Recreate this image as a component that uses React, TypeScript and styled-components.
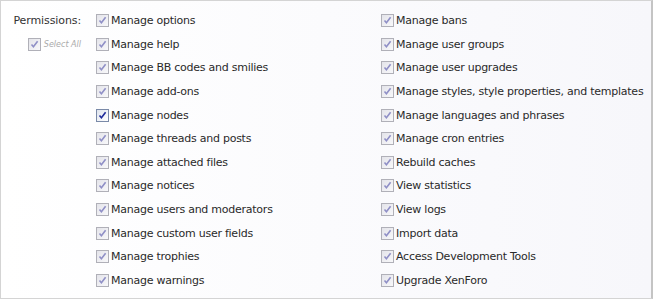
import React, { useState } from 'react';
import styled, { createGlobalStyle } from 'styled-components';

const GlobalStyle = createGlobalStyle`
  html, body {
    margin: 0;
    padding: 0;
    background: #ffffff;
  }
  body {
    font-family: "DejaVu Sans", Tahoma, sans-serif;
  }
`;

const Panel = styled.div`
  box-sizing: border-box;
  width: 653px;
  height: 299px;
  border: 1px solid #d4d4d4;
  border-right: 2px solid #c4c4c4;
  background: linear-gradient(to right, #ffffff 0%, #fbfbfd 50%, #f7f7fb 100%);
  display: flex;
  padding: 8px 0 0 0;
`;

const LabelColumn = styled.div`
  width: 81px;
  flex-shrink: 0;
  display: flex;
  flex-direction: column;
  align-items: flex-end;
`;

const FieldLabel = styled.div`
  height: 23.6px;
  line-height: 23.6px;
  font-size: 11px;
  letter-spacing: -0.1px;
  color: #333;
  padding-right: 1px;
`;

const SelectAll = styled.label`
  height: 23.6px;
  display: flex;
  align-items: center;
  gap: 3px;
  font-size: 8px;
  font-style: italic;
  color: #aaaaaa;
  padding-right: 1px;
`;

const Grid = styled.div`
  display: grid;
  grid-template-columns: 285px 1fr;
  grid-auto-flow: column;
  grid-template-rows: repeat(12, 23.6px);
  padding-left: 14px;
`;

const Item = styled.label`
  display: flex;
  align-items: center;
  gap: 2px;
  font-size: 11px;
  letter-spacing: -0.25px;
  color: #2a2a2a;
  white-space: nowrap;
`;

const Box = styled.span<{ $active?: boolean }>`
  box-sizing: border-box;
  width: 13px;
  height: 13px;
  flex-shrink: 0;
  border: 1px solid ${({ $active }) => ($active ? '#7a8aa8' : '#b0b0b8')};
  background: ${({ $active }) =>
    $active
      ? 'linear-gradient(135deg, #dfe4ee, #ffffff)'
      : 'linear-gradient(135deg, #e4e4ea, #f8f8fa)'};
  display: flex;
  align-items: center;
  justify-content: center;
`;

const Check = ({ active }: { active?: boolean }) => (
  <Box $active={active}>
    <svg width="9" height="9" viewBox="0 0 9 9">
      <path
        d="M1.5 4.6 L3.4 6.8 L7.6 1.2"
        fill="none"
        stroke={active ? '#1e2a9a' : '#8f8fc6'}
        strokeWidth="1.6"
      />
    </svg>
  </Box>
);

const permissions = [
  'Manage options',
  'Manage help',
  'Manage BB codes and smilies',
  'Manage add-ons',
  'Manage nodes',
  'Manage threads and posts',
  'Manage attached files',
  'Manage notices',
  'Manage users and moderators',
  'Manage custom user fields',
  'Manage trophies',
  'Manage warnings',
  'Manage bans',
  'Manage user groups',
  'Manage user upgrades',
  'Manage styles, style properties, and templates',
  'Manage languages and phrases',
  'Manage cron entries',
  'Rebuild caches',
  'View statistics',
  'View logs',
  'Import data',
  'Access Development Tools',
  'Upgrade XenForo',
];

const App = () => {
  const [active] = useState('Manage nodes');

  return (
    <>
      <GlobalStyle />
      <Panel>
        <LabelColumn>
          <FieldLabel>Permissions:</FieldLabel>
          <SelectAll>
            <Check />
            Select All
          </SelectAll>
        </LabelColumn>
        <Grid>
          {permissions.map((name) => (
            <Item key={name}>
              <Check active={name === active} />
              {name}
            </Item>
          ))}
        </Grid>
      </Panel>
    </>
  );
};

export default App;
